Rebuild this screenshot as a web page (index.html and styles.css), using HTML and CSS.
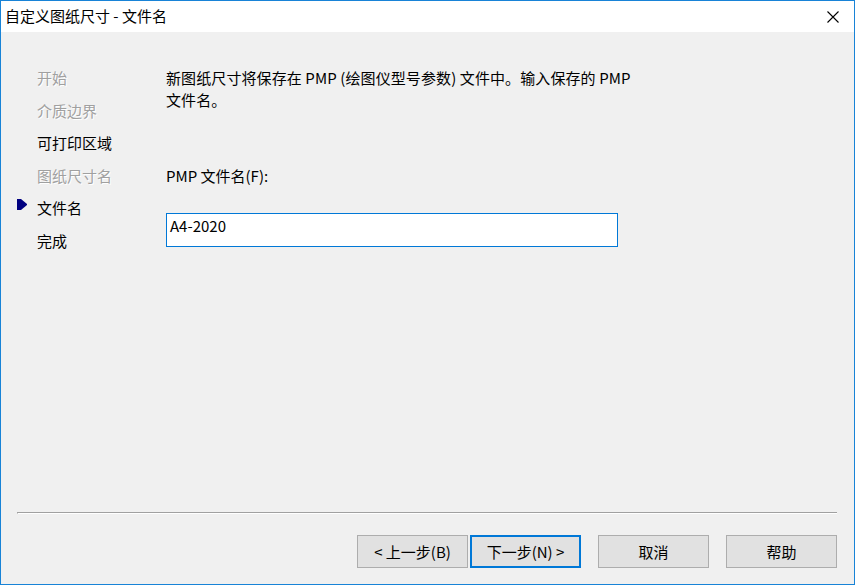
FILE: index.html
```html
<!DOCTYPE html>
<html lang="zh-CN">
<head>
<meta charset="utf-8">
<title>自定义图纸尺寸 - 文件名</title>
<link rel="stylesheet" href="styles.css">
</head>
<body>
<div class="window">
  <div class="titlebar">
    <span class="title">自定义图纸尺寸 - 文件名</span>
    <span class="close">
      <svg width="12" height="12" viewBox="0 0 12 12"><path d="M0.5 0.5 L11.5 11.5 M11.5 0.5 L0.5 11.5" stroke="#000" stroke-width="1.1" fill="none"/></svg>
    </span>
  </div>
  <div class="content">
    <ul class="nav">
      <li class="item disabled"><span class="marker"></span><span>开始</span></li>
      <li class="item disabled"><span class="marker"></span><span>介质边界</span></li>
      <li class="item"><span class="marker"></span><span>可打印区域</span></li>
      <li class="item disabled"><span class="marker"></span><span>图纸尺寸名</span></li>
      <li class="item current"><span class="marker"><svg width="10" height="11" viewBox="0 0 10 11"><polygon points="0,0 4,0 10,5 10,6 4,11 0,11" fill="#000080"/></svg></span><span>文件名</span></li>
      <li class="item"><span class="marker"></span><span>完成</span></li>
    </ul>
    <div class="main">
      <p class="desc">新图纸尺寸将保存在 PMP (绘图仪型号参数) 文件中。输入保存的 PMP<br>文件名。</p>
      <label class="label" for="fname">PMP 文件名(F):</label>
      <div class="input" id="fname">A4-2020</div>
    </div>
  </div>
  <div class="footer">
    <div class="separator"></div>
    <div class="buttons">
      <div class="btn">&lt; 上一步(B)</div>
      <div class="btn default">下一步(N) &gt;</div>
      <div class="btn spaced">取消</div>
      <div class="btn spaced">帮助</div>
    </div>
  </div>
</div>
</body>
</html>
```
FILE: styles.css
```css
* { box-sizing: border-box; }
html, body {
  margin: 0;
  padding: 0;
}
body {
  font-family: "Noto Sans CJK SC", "Noto Sans", sans-serif;
  font-size: 15px;
  color: #000;
  background: #f0f0f0;
}
.window {
  width: 855px;
  height: 585px;
  border: 1px solid #1883d7;
  background: #f0f0f0;
  display: flex;
  flex-direction: column;
}
.titlebar {
  height: 31px;
  background: #fff;
  display: flex;
  align-items: center;
  justify-content: space-between;
  padding-left: 4px;
  padding-right: 15px;
  flex: none;
}
.title {
  line-height: 31px;
  position: relative;
  top: -1px;
}
.close {
  display: flex;
  width: 12px;
  height: 12px;
  margin-top: 1px;
}
.content {
  flex: 1;
  display: flex;
}
.nav {
  list-style: none;
  margin: 0;
  padding: 30px 0 0 16px;
  width: 165px;
  flex: none;
}
.item {
  display: flex;
  align-items: center;
  height: 32.5px;
  line-height: 32.5px;
}
.marker {
  width: 20px;
  flex: none;
  display: flex;
  align-items: center;
}
.marker svg {
  display: block;
  position: relative;
  top: -4px;
}
.disabled {
  color: #a0a0a0;
  text-shadow: 1px 1px 0 #fff;
}
.main {
  padding-top: 35px;
  display: flex;
  flex-direction: column;
  align-items: flex-start;
}
.desc {
  margin: 0;
  line-height: 22px;
  letter-spacing: 0.1px;
}
.label {
  margin-top: 54px;
  line-height: 22px;
}
.input {
  margin-top: 26px;
  width: 452px;
  height: 34px;
  border: 1px solid #0078d7;
  background: #fff;
  padding-left: 3px;
  line-height: 24px;
}
.footer {
  flex: none;
  padding: 0 17px 16px 16px;
}
.separator {
  height: 2px;
  border-top: 1px solid #a0a0a0;
  border-bottom: 1px solid #fff;
  border-left: 1px solid #a0a0a0;
}
.buttons {
  margin-top: 21px;
  display: flex;
  justify-content: flex-end;
  gap: 2px;
}
.btn {
  width: 111px;
  height: 33px;
  border: 1px solid #adadad;
  background: #e1e1e1;
  display: flex;
  align-items: center;
  justify-content: center;
  line-height: 1;
}
.btn.default {
  border: 2px solid #0078d7;
}
.btn.spaced {
  margin-left: 15px;
}
```
